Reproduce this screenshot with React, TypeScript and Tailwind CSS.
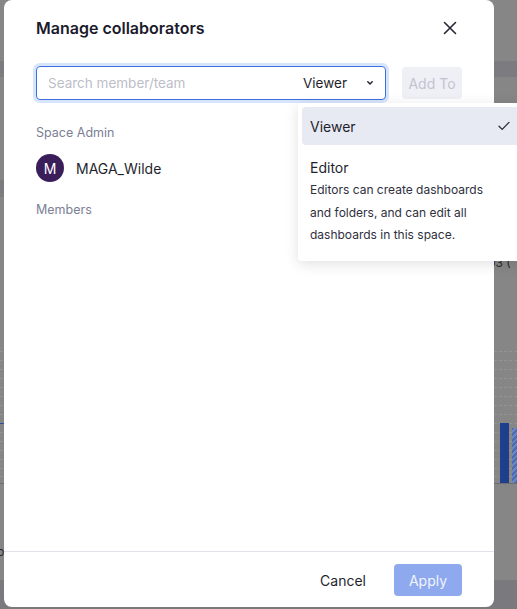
import React from 'react';

function CloseIcon() {
  return (
    <svg width="14" height="14" viewBox="0 0 14 14" fill="none">
      <path d="M1.5 1.5l11 11M12.5 1.5l-11 11" stroke="#252536" strokeWidth="1.6" strokeLinecap="round" />
    </svg>
  );
}

function Caret() {
  return (
    <svg width="6" height="4" viewBox="0 0 6 4" fill="none">
      <path d="M0.8 0.8L3 3l2.2-2.2" stroke="#1f1f2e" strokeWidth="1.4" strokeLinecap="round" strokeLinejoin="round" />
    </svg>
  );
}

function Check() {
  return (
    <svg width="12" height="10" viewBox="0 0 12 10" fill="none">
      <path d="M1 5.2l3.2 3.2L11 1.4" stroke="#2a2a3a" strokeWidth="1.3" strokeLinecap="round" strokeLinejoin="round" />
    </svg>
  );
}

// dimmed dashboard behind the modal
function Backdrop() {
  const dashes = [351, 360, 369, 378, 387, 396, 405, 414, 423, 432, 441, 450, 459, 468, 476];
  return (
    <div className="absolute inset-0 bg-[#868686]">
      <div className="absolute left-0 right-0 top-[61px] h-[16px] bg-[#7b7b80]" />
      <div className="absolute left-0 right-0 top-[180px] h-[17px] bg-[#7b7b80]" />
      <div className="absolute left-0 right-0 bottom-0 h-[29px] bg-[#7a7a7e]" />
      {dashes.map((y) => (
        <div
          key={y}
          className="absolute left-0 right-0 h-px border-t border-dashed border-[#939393]"
          style={{ top: y }}
        />
      ))}
      <div className="absolute left-0 right-0 top-[483px] h-px bg-[#6e6e70]" />
      <div className="absolute left-0 top-[423px] w-[4px] h-px bg-[#2b4f9c]" />
      <div className="absolute left-[500px] top-[423px] w-[9px] h-[60px] bg-[#1d3f8c]" />
      <div className="absolute left-[512px] top-[428px] w-[9px] h-[55px] bg-[repeating-linear-gradient(135deg,#4a6cb3_0px,#4a6cb3_2px,#6f86bd_2px,#6f86bd_4px)]" />
      <span className="absolute left-[488px] top-[257px] text-[12px] leading-[12px] text-[#2a2a2a] font-['Inter',sans-serif]">03 (</span>
      <span className="absolute left-[-3px] top-[545px] text-[12px] leading-[14px] text-[#2a2a2a] font-['Inter',sans-serif]">b</span>
    </div>
  );
}

export default function App() {
  return (
    <div className="relative w-full h-[609px] overflow-hidden font-['Inter',sans-serif]">
      <Backdrop />

      <div className="relative pl-[4px]">
        {/* Modal */}
        <div className="w-[490px] h-[607px] bg-white rounded-lg flex flex-col">
          <div className="flex items-center justify-between px-8 pt-4">
            <h1 className="text-[16px] leading-6 font-semibold text-[#1b1b2d]">Manage collaborators</h1>
            <button className="w-6 h-6 flex items-center justify-center">
              <CloseIcon />
            </button>
          </div>

          <div className="flex items-center gap-4 px-8 mt-[26px]">
            <div className="w-[350px] h-[34px] flex items-center border border-[#3b6fe2] rounded-[4px] ring-[3px] ring-[#d7e5fb] pl-[11px] pr-[12px]">
              <span className="flex-1 text-[13.5px] text-[#bcbec8]">Search member/team</span>
              <span className="text-[13.5px] text-[#1f1f2e]">Viewer</span>
              <span className="ml-[20px] flex items-center"><Caret /></span>
            </div>
            <button className="w-[60px] h-[32px] rounded-[4px] bg-[#eef0f6] text-[14px] text-[#c1c4d0]">Add To</button>
          </div>

          <div className="flex-1 px-8">
            <p className="mt-[23px] text-[12.5px] leading-5 text-[#7c8095]">Space Admin</p>
            <div className="mt-[11px] flex items-center gap-[12px]">
              <div className="w-[28px] h-[28px] rounded-full bg-[#3a1e5a] flex items-center justify-center text-white text-[14px]">M</div>
              <span className="text-[14px] text-[#1f1f2e]">MAGA_Wilde</span>
            </div>
            <p className="mt-[18px] text-[12.5px] leading-5 text-[#7c8095]">Members</p>
          </div>

          <div className="border-t border-[#e2e2ea] flex items-center justify-end gap-4 px-8 pt-[12px] pb-[11px]">
            <button className="px-3 h-[32px] text-[14px] text-[#1f1f2e]">Cancel</button>
            <button className="w-[68px] h-[32px] rounded-[4px] bg-[#8fa9ee] text-[14px] text-[#f0f4fe]">Apply</button>
          </div>
        </div>
      </div>

      {/* Role dropdown */}
      <div className="absolute left-[298px] top-[103px] w-[226px] bg-white rounded-[4px] shadow-[0_3px_14px_rgba(0,0,0,0.12)] p-1 pb-[14px]">
        <div className="h-[38px] flex items-center justify-between bg-[#e8eaf3] rounded-[4px] px-2 pr-[10px]">
          <span className="text-[14px] text-[#1f1f2e]">Viewer</span>
          <Check />
        </div>
        <div className="px-2 pt-[12px]">
          <p className="text-[14px] leading-[22px] text-[#1f1f2e]">Editor</p>
          <p className="text-[12px] leading-[22.5px] text-[#2f2f3e] w-[180px]">
            Editors can create dashboards and folders, and can edit all dashboards in this space.
          </p>
        </div>
      </div>
    </div>
  );
}
